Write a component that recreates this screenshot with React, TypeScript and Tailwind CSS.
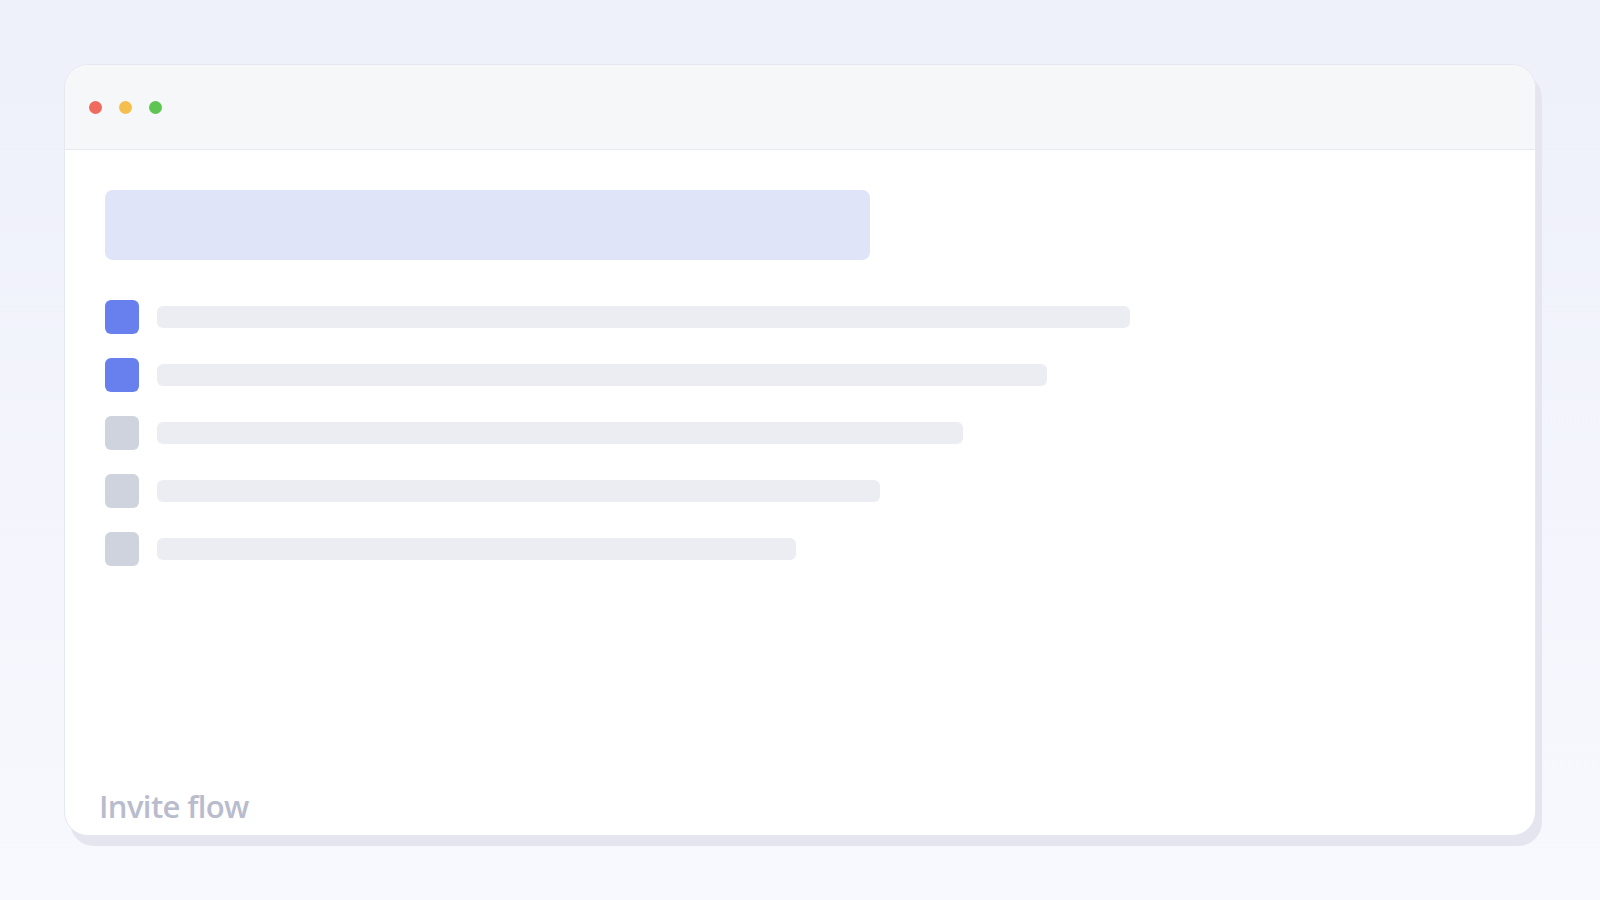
const bars = [
  { on: true, width: "70%" },
  { on: true, width: "64%" },
  { on: false, width: "58%" },
  { on: false, width: "52%" },
  { on: false, width: "46%" },
]

export default function App() {
  return (
    <main className="h-[900px] w-[1600px] bg-gradient-to-b from-[#eef0fa] to-[#f8f9fe] p-16 font-['Open_Sans',sans-serif]">
      <div className="flex h-full flex-col overflow-hidden rounded-[24px] border border-[#e6e8f0] bg-white shadow-[6px_10px_0_0_#e4e5ef]">
        <div className="flex h-[85px] shrink-0 items-center gap-[17px] border-b border-[#e8e9ef] bg-[#f6f7f9] px-6">
          <span className="h-[13px] w-[13px] rounded-full bg-[#ef6b5e]" />
          <span className="h-[13px] w-[13px] rounded-full bg-[#f5bf4f]" />
          <span className="h-[13px] w-[13px] rounded-full bg-[#5ec553]" />
        </div>
        <div className="flex flex-1 flex-col">
          <div className="flex flex-1 flex-col p-10">
            <div className="h-[70px] w-[55%] rounded-lg bg-[#e0e4f8]" />
            <div className="mt-10 flex flex-col gap-6">
              {bars.map((b, i) => (
                <div key={i} className="flex items-center gap-[18px]">
                  <div
                    className={
                      b.on
                        ? "h-[34px] w-[34px] shrink-0 rounded-md bg-[#6880ee]"
                        : "h-[34px] w-[34px] shrink-0 rounded-md bg-[#cfd3de]"
                    }
                  />
                  <div className="flex-1">
                    <div className="h-[22px] rounded-md bg-[#ecedf2]" style={{ width: `calc(${b.width} * 1390 / 1338)` }} />
                  </div>
                </div>
              ))}
            </div>
          </div>
          <p className="px-[34px] pb-[7px] text-[31px] font-semibold leading-[44px] tracking-[-0.02em] text-[#b8bccd]">Invite flow</p>
        </div>
      </div>
    </main>
  )
}
